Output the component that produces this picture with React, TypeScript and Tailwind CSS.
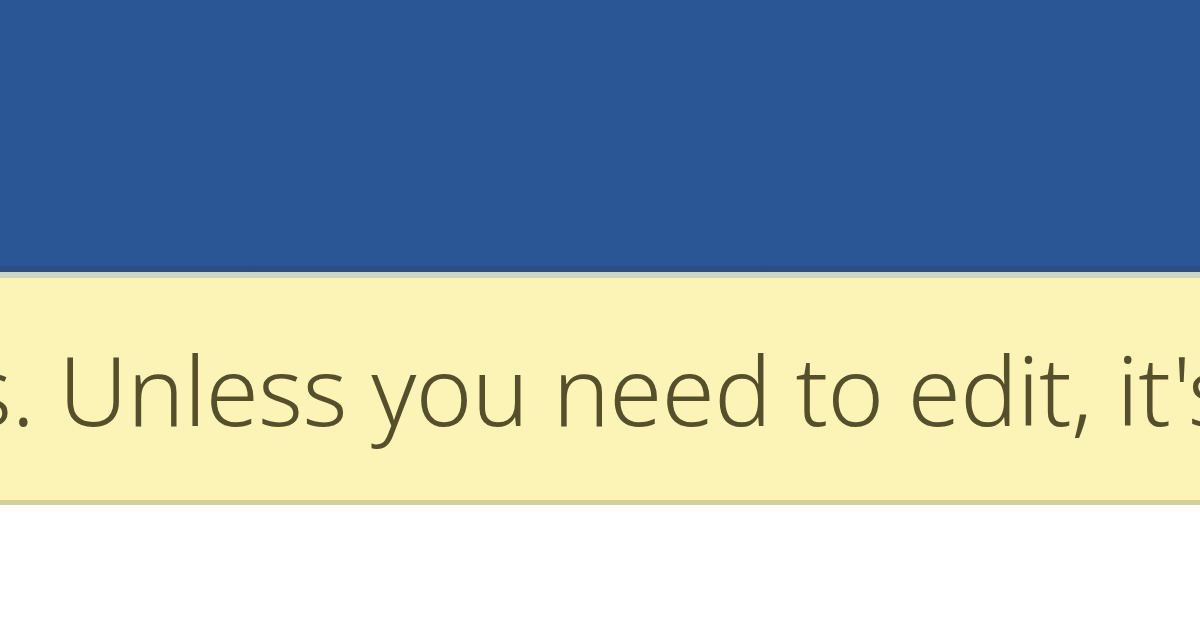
import React from 'react';

export default function App() {
  return (
    <div className="w-[1200px] h-[630px] flex flex-col bg-white overflow-hidden">
      {/* Title band */}
      <div className="h-[266px] bg-[#2a5696]" />
      <div className="h-[6px] bg-gradient-to-b from-[#2a4f85] to-[#2f4e78]" />
      <div className="h-[6px] bg-[#ccd6c2]" />

      {/* Message bar */}
      <div className="h-[222px] bg-[#fcf4b6] flex items-center overflow-hidden">
        <p
          className="whitespace-nowrap text-[96px] font-light leading-none text-[#554f2c] ml-[-33px] mt-[0px] tracking-[-0.6px]"
          style={{ fontFamily: '"Noto Sans", "Open Sans", sans-serif' }}
        >
          s. Unless you need to edit, it's safer to stay in Protected View.
        </p>
      </div>
      <div className="h-[5px] bg-[#d4d09c]" />
      <div className="flex-1 bg-white" />
    </div>
  );
}
